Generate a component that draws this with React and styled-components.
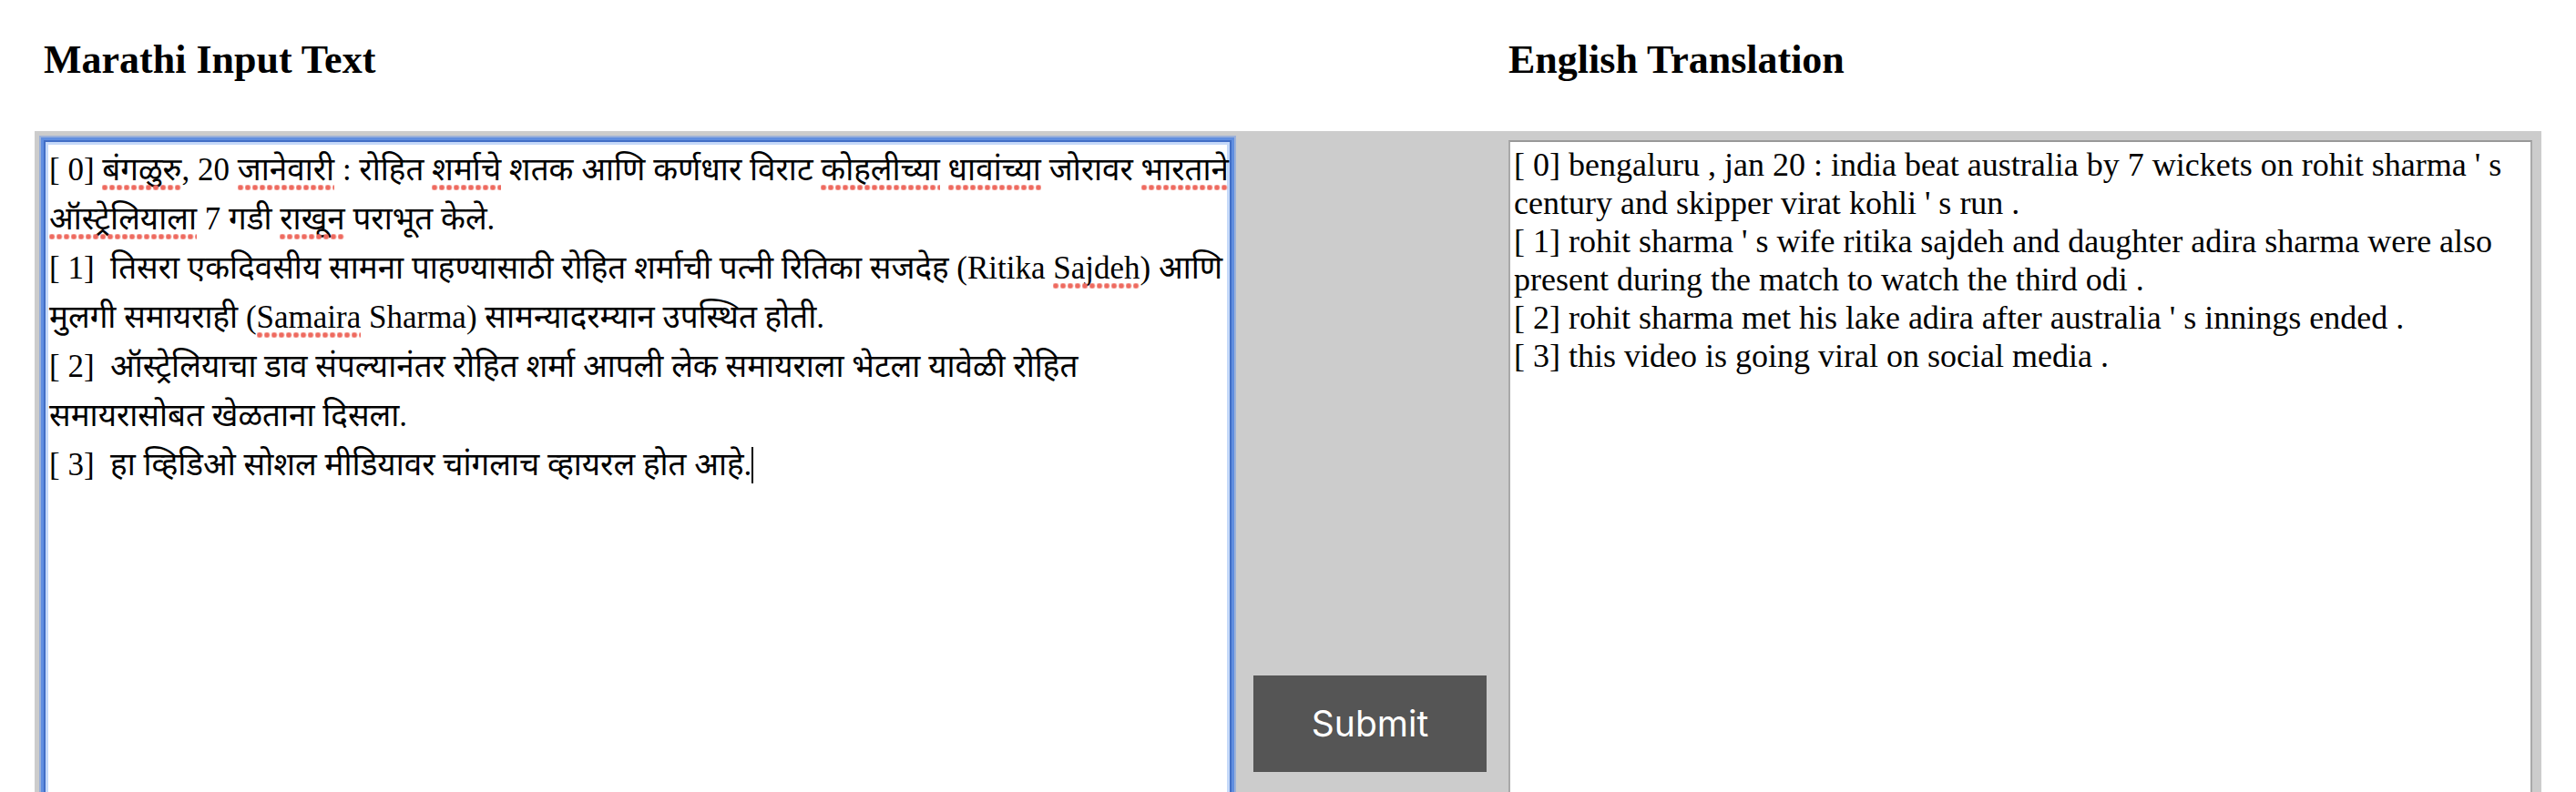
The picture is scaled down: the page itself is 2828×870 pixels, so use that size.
import React, { useLayoutEffect, useRef, useState } from "react";
import styled, { createGlobalStyle, css } from "styled-components";

const GlobalStyle = createGlobalStyle`
  * { box-sizing: border-box; }
  body { margin: 0; background: #fff; color: #000; }
`;

const serif = `"Liberation Serif", "Noto Sans Devanagari", "Noto Sans", serif`;

const columns = css`
  display: grid;
  grid-template-columns: 326fr 256px 281fr;
  column-gap: 24px;
  padding: 0 10px;
`;

const Page = styled.main`
  display: flex;
  flex-direction: column;
  height: 100vh;
  padding: 0 38px;
  overflow: hidden;
`;

const Headings = styled.header`
  ${columns}
  flex: none;
  height: 144px;
  padding-top: 40px;
`;

const Heading = styled.label`
  grid-column: ${(p) => p.$column};
  font: bold 44px/52px ${serif};
`;

const Panel = styled.form`
  ${columns}
  flex: 1;
  min-height: 0;
  padding-top: 10px;
  background: #ccc;
`;

const textMetrics = css`
  margin: 0;
  padding: 4px 0 4px 4px;
  border: 2px solid #a9a9a9;
  font: ${(p) => p.$size}px/${(p) => p.$line}px ${serif};
  white-space: pre-wrap;
  overflow-wrap: break-word;
`;

const Editor = styled.div`
  position: relative;
  margin-bottom: -16px;
`;

const TextBox = styled.textarea`
  ${textMetrics}
  display: block;
  width: 100%;
  height: 100%;
  border-top-color: #999;
  background: #fff;
  color: #000;
  resize: none;
  outline: none;
  overflow: hidden;

  ${(p) =>
    p.$active &&
    css`
      border-color: #416ec6;
      caret-color: transparent;
      box-shadow: 0 0 0 3px #608ee0, 0 0 0 5px #9bb1d9,
        inset 0 0 0 3px #c5d9f9;
    `}
`;

/* Holds the text only while the positions of its words are being measured. */
const Probe = styled.div`
  ${textMetrics}
  position: absolute;
  inset: 0;
  visibility: hidden;
  pointer-events: none;
`;

const Squiggle = styled.i`
  position: absolute;
  height: 6px;
  background: radial-gradient(circle at 3px 3px, #ee6a5f 2px, transparent 4px)
    0 0 / 8px 6px repeat-x;
  pointer-events: none;
`;

const Caret = styled.i`
  position: absolute;
  width: 2px;
  height: 40px;
  background: #000;
  pointer-events: none;
`;

const Action = styled.div`
  display: flex;
  flex-direction: column;
  justify-content: flex-end;
  padding-bottom: 22px;
`;

const Submit = styled.button`
  height: 106px;
  border: 0;
  background: #555;
  color: #fff;
  font: 39px/48px Inter, sans-serif;
`;

const MARATHI = `[ 0] बंगळुरु, 20 जानेवारी : रोहित शर्माचे शतक आणि कर्णधार विराट कोहलीच्या धावांच्या जोरावर भारताने ऑस्ट्रेलियाला 7 गडी राखून पराभूत केले.
[ 1]  तिसरा एकदिवसीय सामना पाहण्यासाठी रोहित शर्माची पत्नी रितिका सजदेह (Ritika Sajdeh) आणि मुलगी समायराही (Samaira Sharma) सामन्यादरम्यान उपस्थित होती.
[ 2]  ऑस्ट्रेलियाचा डाव संपल्यानंतर रोहित शर्मा आपली लेक समायराला भेटला यावेळी रोहित समायरासोबत खेळताना दिसला.
[ 3]  हा व्हिडिओ सोशल मीडियावर चांगलाच व्हायरल होत आहे.`;

const ENGLISH = `[ 0] bengaluru , jan 20 : india beat australia by 7 wickets on rohit sharma ' s century and skipper virat kohli ' s run .
[ 1] rohit sharma ' s wife ritika sajdeh and daughter adira sharma were also present during the match to watch the third odi .
[ 2] rohit sharma met his lake adira after australia ' s innings ended .
[ 3] this video is going viral on social media .`;

const FLAGGED =
  /बंगळुरु|जानेवारी|शर्माचे|कोहलीच्या|धावांच्या|भारताने|ऑस्ट्रेलियाला|राखून|Sajdeh|Samaira/g;

function measure(probe, text) {
  probe.textContent = text;
  const node = probe.firstChild;
  const base = probe.getBoundingClientRect();
  const rectOf = (from, to) => {
    const range = document.createRange();
    range.setStart(node, from);
    range.setEnd(node, to);
    const rects = range.getClientRects();
    const r = rects[rects.length - 1];
    return {
      left: Math.round(r.left - base.left),
      right: Math.round(r.right - base.left),
      middle: Math.round((r.top + r.bottom) / 2 - base.top),
    };
  };
  const words = [...text.matchAll(FLAGGED)].map((m) =>
    rectOf(m.index, m.index + m[0].length)
  );
  const end = text ? rectOf(text.length - 1, text.length) : null;
  probe.textContent = "";
  return { words, end };
}

function SpellCheckedBox({ id, value, onChange, size, line }) {
  const probe = useRef(null);
  const [marks, setMarks] = useState({ words: [], end: null });

  useLayoutEffect(() => {
    const update = () => setMarks(measure(probe.current, value));
    update();
    window.addEventListener("resize", update);
    return () => window.removeEventListener("resize", update);
  }, [value]);

  return (
    <Editor>
      <TextBox
        id={id}
        spellCheck={false}
        $size={size}
        $line={line}
        $active
        value={value}
        onChange={(e) => onChange(e.target.value)}
      />
      <Probe ref={probe} aria-hidden="true" $size={size} $line={line} />
      {marks.words.map((w, i) => (
        <Squiggle
          key={i}
          style={{ left: w.left, width: w.right - w.left, top: w.middle + 16 }}
        />
      ))}
      {marks.end && (
        <Caret style={{ left: marks.end.right, top: marks.end.middle - 20 }} />
      )}
    </Editor>
  );
}

export default function App() {
  const [source, setSource] = useState(MARATHI);

  return (
    <>
      <GlobalStyle />
      <Page>
        <Headings>
          <Heading $column={1} htmlFor="source">Marathi Input Text</Heading>
          <Heading $column={3} htmlFor="result">English Translation</Heading>
        </Headings>
        <Panel onSubmit={(e) => e.preventDefault()}>
          <SpellCheckedBox
            id="source"
            size={35}
            line={54}
            value={source}
            onChange={setSource}
          />
          <Action>
            <Submit type="submit">Submit</Submit>
          </Action>
          <Editor>
            <TextBox
              id="result"
              spellCheck={false}
              readOnly
              $size={36}
              $line={42}
              value={ENGLISH}
            />
          </Editor>
        </Panel>
      </Page>
    </>
  );
}
